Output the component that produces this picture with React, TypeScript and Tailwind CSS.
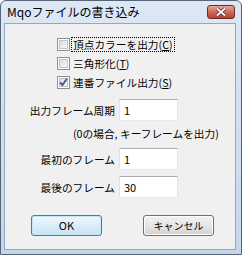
import React from 'react';

const font = { fontFamily: '"Noto Sans CJK JP", "Noto Sans", sans-serif' };

const CheckBox: React.FC<{ checked?: boolean }> = ({ checked }) => (
  <div className="w-[13px] h-[13px] shrink-0 border border-[#8e8f8f] bg-white p-[1px]">
    <div className="relative w-full h-full border border-[#bfc3ca] bg-gradient-to-br from-[#d9dce0] to-[#f8f8f8]">
      {checked && (
        <svg className="absolute -left-[2px] -top-[2px]" width="11" height="11" viewBox="0 0 11 11">
          <path d="M2 5.5 L4.5 8 L9 1.5" fill="none" stroke="#42578c" strokeWidth="1.8" />
        </svg>
      )}
    </div>
  </div>
);

const CheckRow: React.FC<{ label: string; hot: string; checked?: boolean; focused?: boolean }> = ({
  label,
  hot,
  checked,
  focused,
}) => (
  <div className="h-[19px] flex items-center">
    <CheckBox checked={checked} />
    <span
      className={`ml-[1px] h-[15px] px-[1px] leading-[13px] text-[10.7px] text-black border border-dotted ${
        focused ? 'border-black' : 'border-transparent'
      }`}
    >
      {label}(<span className="underline">{hot}</span>)
    </span>
  </div>
);

const FieldRow: React.FC<{ label: string; value: string; className?: string }> = ({ label, value, className }) => (
  <div className={`flex items-center ${className ?? ''}`}>
    <div className="w-[110px] text-right text-[10.7px] text-black leading-[15px]">{label}</div>
    <div className="ml-[4px] w-[59px] h-[22px] flex items-center pl-[4px] bg-white border border-[#e2e3ea] border-t-[#abadb3] border-b-[#e3e9ef] text-[11px] text-black">
      {value}
    </div>
  </div>
);

export default function App() {
  return (
    <div className="w-[242px] h-[255px] bg-white" style={font}>
      <div className="w-[242px] h-[255px] flex flex-col border border-[#566476] rounded-t-[6px] bg-gradient-to-b from-[#dde8f6] to-[#c5d6ec] overflow-hidden">
        {/* Title bar */}
        <div className="h-[22px] shrink-0 flex items-center pl-[6px] pr-[6px]">
          <span className="text-[12px] text-black leading-none">Mqoファイルの書き込み</span>
          <div className="ml-auto w-[28px] h-[14px] rounded-[3px] border border-[#6e2b22] bg-gradient-to-b from-[#e6a898] via-[#cf6a58] to-[#b8412f] flex items-center justify-center">
            <svg width="12" height="10" viewBox="0 0 12 10">
              <path d="M2 1.5 L10 8.5 M10 1.5 L2 8.5" stroke="#4a2a26" strokeWidth="3.2" />
              <path d="M2 1.5 L10 8.5 M10 1.5 L2 8.5" stroke="#ffffff" strokeWidth="1.8" />
            </svg>
          </div>
        </div>

        {/* Client area */}
        <div className="flex-1 ml-[3px] mr-[5px] mb-[4px] border border-[#93a8c5] bg-[#f0f0f0] flex flex-col">
          <div className="pt-[11px] pl-[52px] flex flex-col">
            <CheckRow label="頂点カラーを出力" hot="C" focused />
            <CheckRow label="三角形化" hot="T" />
            <CheckRow label="連番ファイル出力" hot="S" checked />
          </div>

          <FieldRow label="出力フレーム周期" value="1" className="mt-[7px]" />
          <div className="mt-[5px] pl-[68px] h-[15px] leading-[15px] text-[10.7px] text-black">
            (0の場合, キーフレームを出力)
          </div>
          <FieldRow label="最初のフレーム" value="1" className="mt-[7px]" />
          <FieldRow label="最後のフレーム" value="30" className="mt-[6px]" />

          <div className="mt-[17px] pl-[26px] flex gap-[41px]">
            <button className="w-[71px] h-[21px] rounded-[3px] border border-[#3c7fb1] p-0 text-[11px] text-black shadow-[inset_0_0_0_1px_#c3e6f8] bg-gradient-to-b from-[#eef7fc] via-[#dcedf8] to-[#c9e3f3]">
              OK
            </button>
            <button className="w-[71px] h-[21px] rounded-[3px] border border-[#707070] p-0 text-[10px] text-black shadow-[inset_0_0_0_1px_#fcfcfc] bg-gradient-to-b from-[#f2f2f2] via-[#e6e6e6] to-[#d2d2d2]">
              キャンセル
            </button>
          </div>
        </div>
      </div>
    </div>
  );
}
